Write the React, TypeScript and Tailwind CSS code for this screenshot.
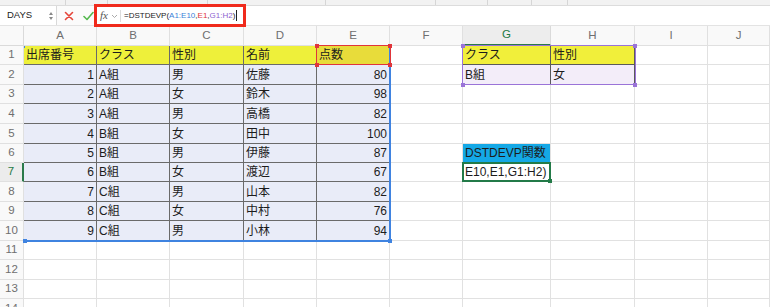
import React from "react";

const colW = [24, 73, 73, 74, 73, 73, 73, 88, 84, 73, 62];
const colLeft: number[] = [];
{
  let s = 0;
  for (const w of colW) {
    colLeft.push(s);
    s += w;
  }
}
const letters = ["A", "B", "C", "D", "E", "F", "G", "H", "I", "J"];
const rowH = [19, 20, 19, 20, 20, 19, 19, 20, 19, 20, 19, 20, 19, 20];
const HEADER_TOP = 26;
const HEADER_H = 20;
const rowTop: number[] = [];
{
  let s = HEADER_TOP + HEADER_H;
  for (const h of rowH) {
    rowTop.push(s);
    s += h;
  }
}

const data: [number, string, string, string, number][] = [
  [1, "A組", "男", "佐藤", 80],
  [2, "A組", "女", "鈴木", 98],
  [3, "A組", "男", "高橋", 82],
  [4, "B組", "女", "田中", 100],
  [5, "B組", "男", "伊藤", 87],
  [6, "B組", "女", "渡辺", 67],
  [7, "C組", "男", "山本", 82],
  [8, "C組", "女", "中村", 76],
  [9, "C組", "男", "小林", 94],
];

type Cell = { text?: string; align?: "l" | "r"; cls?: string };

function getCell(r: number, c: number): Cell {
  if (r === 1 && c <= 4) {
    const t = ["出席番号", "クラス", "性別", "名前", "点数"][c];
    return { text: t, cls: c === 4 ? "bg-[#e8dc3a] border-[#6a6a6a]" : "bg-[#eef03a] border-[#6a6a6a]" };
  }
  if (r >= 2 && r <= 10 && c <= 4) {
    const d = data[r - 2];
    const v = d[c];
    return {
      text: String(v),
      align: typeof v === "number" ? "r" : "l",
      cls: "bg-[#e9ecf8] border-[#6a6a6a]",
    };
  }
  if (r === 1 && (c === 6 || c === 7)) {
    return { text: c === 6 ? "クラス" : "性別", cls: "bg-[#f1ef3a] border-[#5a5a5a]" };
  }
  if (r === 2 && (c === 6 || c === 7)) {
    return { text: c === 6 ? "B組" : "女", cls: "bg-[#f3edf9] border-[#5a5a5a]" };
  }
  if (r === 6 && c === 6) {
    return { text: "DSTDEVP関数", cls: "bg-[#14a8e6] border-[#e1e1e1]" };
  }
  if (r === 7 && c === 6) {
    return { text: "E10,E1,G1:H2)", cls: "bg-white border-[#e1e1e1]" };
  }
  return { cls: "bg-white border-[#e1e1e1]" };
}

function Handle({ x, y, color }: { x: number; y: number; color: string }) {
  return (
    <div
      className="absolute w-[4px] h-[4px]"
      style={{ left: x - 2, top: y - 2, backgroundColor: color }}
    />
  );
}

export default function App() {
  return (
    <div
      className="relative w-[770px] h-[307px] overflow-hidden bg-white text-[#1c1c1c]"
      style={{ fontFamily: '"Liberation Sans", "Noto Sans CJK JP", sans-serif' }}
    >
      {/* top toolbar remnant */}
      <div className="h-[6px] bg-[#f2f2f2] border-b border-[#dcdcdc] flex">
        <div className="w-[66px] border-r border-[#d6d6d6]" />
        <div className="w-[42px] border-r border-[#d6d6d6]" />
        <div className="w-[100px] border-r border-[#d6d6d6]" />
        <div className="w-[118px] border-r border-[#d6d6d6]" />
        <div className="w-[110px] border-r border-[#d6d6d6]" />
        <div className="w-[52px] border-r border-[#d6d6d6]" />
        <div className="w-[44px] border-r border-[#d6d6d6]" />
        <div className="w-[36px] border-r border-[#d6d6d6]" />
      </div>
      {/* formula bar */}
      <div className="h-[20px] flex items-center bg-[#fbfbfb] border-b border-[#e3e3e3]">
        <div className="w-[57px] h-full flex items-center justify-between pl-[7px] pr-[3px] bg-white border-r border-[#d9d9d9]">
          <span className="text-[9.5px] text-[#222]">DAYS</span>
          <span className="flex flex-col items-center gap-[2px]">
            <span className="block w-0 h-0 border-l-[2.5px] border-r-[2.5px] border-b-[3px] border-l-transparent border-r-transparent border-b-[#888]" />
            <span className="block w-0 h-0 border-l-[2.5px] border-r-[2.5px] border-t-[3px] border-l-transparent border-r-transparent border-t-[#888]" />
          </span>
        </div>
        <div className="w-[20px] flex justify-center ml-[2px]">
          <svg width="10" height="10" viewBox="0 0 10 10">
            <path d="M1.5 1.5 L8.5 8.5 M8.5 1.5 L1.5 8.5" stroke="#e5453a" strokeWidth="1.6" strokeLinecap="round" />
          </svg>
        </div>
        <div className="w-[18px] flex justify-center">
          <svg width="11" height="10" viewBox="0 0 11 10">
            <path d="M1 5.5 L4 8.5 L10 1.5" stroke="#55b94f" strokeWidth="1.6" fill="none" strokeLinecap="round" strokeLinejoin="round" />
          </svg>
        </div>
        <div className="flex-1 h-full flex items-center bg-white pl-[3px]">
          <span
            className="italic text-[11px] text-[#555]"
            style={{ fontFamily: '"Liberation Serif", serif' }}
          >
            fx
          </span>
          <svg width="7" height="5" viewBox="0 0 7 5" className="ml-[3px] mt-[2px]">
            <path d="M1 1 L3.5 3.5 L6 1" stroke="#aaa" strokeWidth="1" fill="none" />
          </svg>
          <div className="w-px h-[12px] bg-[#dcdcdc] ml-[2px]" />
          <span className="text-[8px] ml-[3px] text-[#222]">
            =DSTDEVP(<span className="text-[#3c7fd8]">A1:E10</span>,<span className="text-[#e0353a]">E1</span>,<span className="text-[#8e5fd0]">G1:H2</span>)
          </span>
          <span className="w-px h-[11px] bg-[#222] ml-[1px]" />
        </div>
      </div>

      {/* column header */}
      <div className="flex h-[20px] bg-[#f9f9f9]">
        {colW.map((w, i) => {
          if (i === 0)
            return (
              <div key={i} className="h-full border-r border-b border-[#dadada] bg-[#f9f9f9]" style={{ width: w }} />
            );
          const sel = i === 7;
          return (
            <div
              key={i}
              className={
                sel
                  ? "h-full flex items-center justify-center text-[11.5px] text-[#1e7a46] bg-[#ededed] border-r border-[#dadada] border-b-2 border-b-[#2a7a4b]"
                  : "h-full flex items-center justify-center text-[11.5px] text-[#6f6f6f] border-r border-b border-[#e0e0e0]"
              }
              style={{ width: w }}
            >
              {letters[i - 1]}
            </div>
          );
        })}
      </div>

      {/* rows */}
      {rowH.map((h, ri) => {
        const r = ri + 1;
        return (
          <div key={r} className="flex" style={{ height: h }}>
            <div
              className={
                r === 7
                  ? "h-full flex items-center justify-center text-[11.5px] text-[#1e7a46] bg-[#ececec] border-r-2 border-[#2a7a4b] border-b border-b-[#e0e0e0]"
                  : "h-full flex items-center justify-center text-[11.5px] text-[#6f6f6f] bg-[#f9f9f9] border-r border-b border-[#e0e0e0]"
              }
              style={{ width: colW[0] }}
            >
              {r}
            </div>
            {colW.slice(1).map((w, ci) => {
              const cell = getCell(r, ci);
              return (
                <div
                  key={ci}
                  className={
                    "h-full flex items-center border-r border-b overflow-hidden whitespace-nowrap text-[12px] " +
                    (cell.align === "r" ? "justify-end pr-[2px] " : "justify-start pl-[2px] ") +
                    (cell.cls ?? "")
                  }
                  style={{ width: w }}
                >
                  {cell.text}
                </div>
              );
            })}
          </div>
        );
      })}

      {/* blue range A1:E10 */}
      <div
        className="absolute border-r-2 border-b-2 border-[#3f83e0]"
        style={{ left: colLeft[1], top: rowTop[0], width: colLeft[6] - colLeft[1] + 1, height: rowTop[10] - rowTop[0] + 1 }}
      />
      <div
        className="absolute w-px bg-[#3f83e0]"
        style={{ left: colLeft[1], top: rowTop[0], height: 2 }}
      />
      <Handle x={colLeft[1] + 1} y={rowTop[10]} color="#3f83e0" />
      <Handle x={colLeft[6]} y={rowTop[10]} color="#3f83e0" />
      {/* red E1 */}
      <div
        className="absolute border-[1.5px] border-[#e0353a]"
        style={{ left: colLeft[5] - 1, top: rowTop[0] - 1, width: colW[5] + 2, height: rowH[0] + 1 }}
      />
      <Handle x={colLeft[5]} y={rowTop[0]} color="#e0353a" />
      <Handle x={colLeft[6]} y={rowTop[0]} color="#e0353a" />
      <Handle x={colLeft[5]} y={rowTop[1]} color="#e0353a" />
      <Handle x={colLeft[6]} y={rowTop[1]} color="#e0353a" />
      {/* purple G1:H2 */}
      <div
        className="absolute border-[1.5px] border-[#9a73d8]"
        style={{ left: colLeft[7] - 1, top: rowTop[0] - 1, width: colLeft[9] - colLeft[7] + 2, height: rowTop[2] - rowTop[0] + 1 }}
      />
      <Handle x={colLeft[7]} y={rowTop[0]} color="#9a73d8" />
      <Handle x={colLeft[9]} y={rowTop[0]} color="#9a73d8" />
      <Handle x={colLeft[7]} y={rowTop[2]} color="#9a73d8" />
      <Handle x={colLeft[9]} y={rowTop[2]} color="#9a73d8" />
      {/* green active G7 */}
      <div
        className="absolute border-2 border-[#237a48]"
        style={{ left: colLeft[7] - 1, top: rowTop[6] - 1, width: colW[7] + 1, height: rowH[6] + 1 }}
      />
      <Handle x={colLeft[8] - 1} y={rowTop[7] - 1} color="#237a48" />

      {/* red annotation box around formula */}
      <div className="absolute left-[94px] top-[4px] w-[152px] h-[23px] border-[3px] border-[#f02a1c]" />
    </div>
  );
}
